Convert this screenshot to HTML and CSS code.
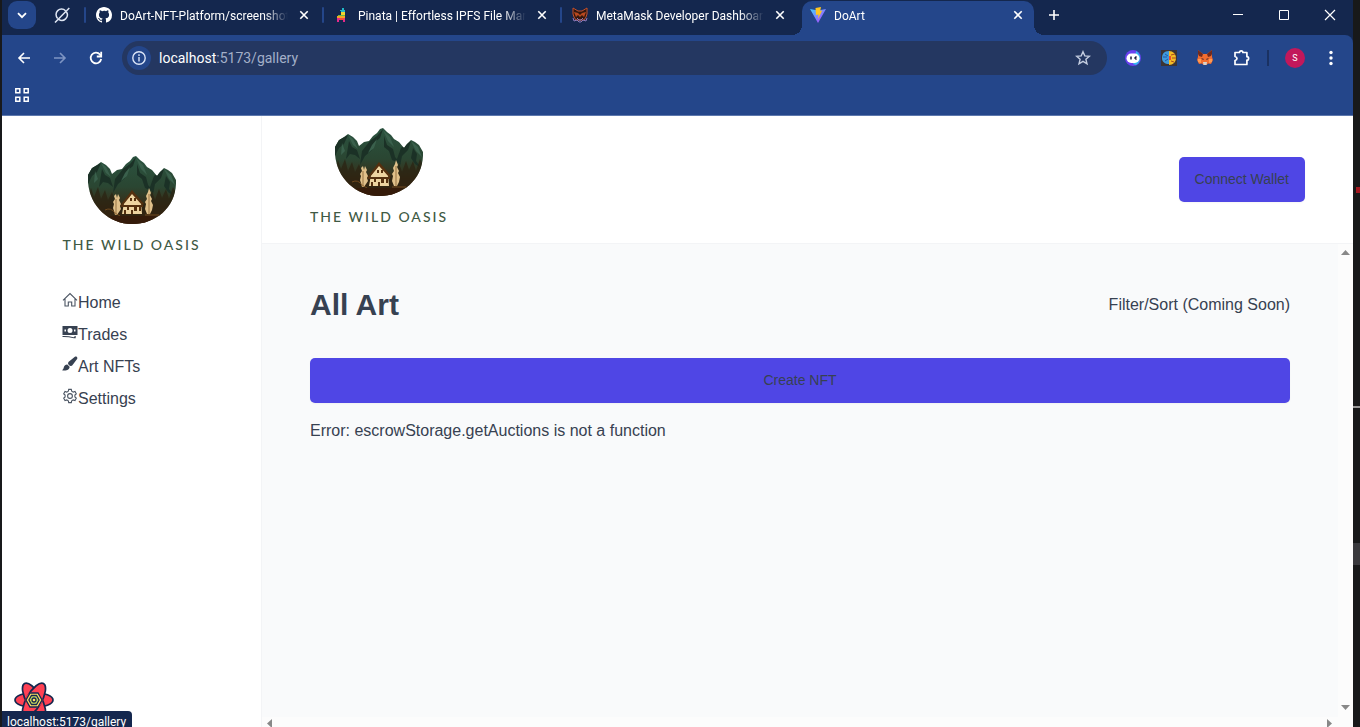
FILE: index.html
```html
<!DOCTYPE html>
<html lang="en">
<head>
<meta charset="utf-8">
<title>DoArt</title>
<link rel="stylesheet" href="styles.css">
</head>
<body>
<svg class="defs" aria-hidden="true">
  <defs>
    <linearGradient id="slope" x1="0" y1="0" x2="0" y2="1">
      <stop offset="0" stop-color="#2b5340"/><stop offset=".45" stop-color="#2a4632"/><stop offset=".75" stop-color="#3a2a15"/><stop offset="1" stop-color="#4f280d"/>
    </linearGradient>
    <clipPath id="bowl"><path d="M0 19 4 12 9 9 13 6 18 9 22 13 24 18 29 14 34 13 38 8 42 5 45 1 48 0 52 4 56 7 59 11 64 14 69 20 72 16 76 12 80 14 84 17 88 24C89 50 69 68 44 68S-2 47 0 19Z"/></clipPath>
    <symbol id="oasis" viewBox="0 0 88 68">
      <g clip-path="url(#bowl)">
        <path fill="url(#slope)" d="M0 0h88v68H0z"/>
        <path fill="#1b3126" d="M13 7 9 16l-5 4-4 8V14zM14 13l3 6 5 3 3 9-5-4-5-1-4 5zM48 1l-3 9-6 5-2 7-7 6-5 9 2-14 8-10 7-5zM49 8l3 9 6 4 2 8 6 7-9-4-3-9-5-4zM76 13l-3 9-6 6-2 10-3-7 4-11zM78 20l4 6-1 7 5 7-6-4-4-6z"/>
        <path fill="#3a604c" d="m13 7 5 4 5 10-5-4zM48 2l7 7 4 10-6-6zM42 11l-3 9-6 5 4-8zM76 13l7 6 4 10-6-6zM7 15l3 8-4 4z"/>
        <path fill="#2b2211" opacity=".7" d="M0 40l3-8 3 9 4-10 3 12 4-9 3 10 4-8 4 11h32l4-12 3 9 4-11 3 9 4-9 3 10 4-12 5 9v40H0z"/>
        <path fill="#e0c08a" d="m26 40 2-2 1 4 1-4 2 4-1 2 2 4-1 2 1 3-2 3-2 3h-2l-1-4-1-3 1-4-1-2 2-3zM61 32l2 5-1 2 2 4-1 2 2 4-1 5-2 4h-3l-2-5 1-5-1-2 2-3-1-3 2-4z"/>
        <path fill="none" stroke="#755022" stroke-width=".7" d="M28 43v16M61 38v21"/>
        <path fill="#edd3a0" d="M36 47 44 37l9 9 1 12H34z"/>
        <path fill="#55300f" d="m44 34 12 14-2 1-10-11-9 11-3 1zM33 49h22v2H33zM39 51h2v3h-2zM46 51h3v4h-3zM51 51h2v4h-2zM42 42h2v3h-2zM46 42h2v3h-2zM36 54h2v4h-2zM43 54h2v4h-2z"/>
        <path fill="none" stroke="#8d5a25" stroke-width=".7" d="M17 54q6-3 10 3l5 3M57 59h14M36 61h18"/>
        <path fill="#351b0a" d="M21 60h47L58 68H30z"/>
      </g>
    </symbol>
    <symbol id="close" viewBox="0 0 16 16"><path fill="none" stroke="#fff" stroke-width="1.6" d="m4.300 4.300 7.400 7.400m0-7.400-7.400 7.400"/></symbol>
    <linearGradient id="vite" x1="0" x2="1" y1="0" y2="1"><stop stop-color="#41d1ff"/><stop offset="1" stop-color="#bd34fe"/></linearGradient>
  </defs>
</svg>

<div class="desktop">
<div class="browser">
  <header class="tabstrip">
    <button class="tab-search" aria-label="Search tabs"><svg width="16" height="16" viewBox="0 0 16 16"><path fill="none" stroke="#fff" stroke-width="1.800" d="m4 6.200 4 4 4-4"/></svg></button>
    <div class="pinned"><svg width="16" height="16" viewBox="0 0 16 16" fill="none" stroke="#dfe6f3" stroke-width="1.500"><path d="M11.500 3.700A5.500 5.500 0 0 0 3.600 11.400M4.700 12.400A5.500 5.500 0 0 0 12.500 5M1 15.500 15.300 1"/></svg></div>
    <span class="sep"></span>
    <div class="tab">
      <svg width="16" height="16" viewBox="0 0 16 16"><path fill="#fff" d="M8 0C3.580 0 0 3.580 0 8c0 3.540 2.290 6.530 5.470 7.590.4.070.55-.17.55-.38v-1.490c-2.010.37-2.530-.49-2.690-.94-.09-.23-.48-.94-.82-1.130-.28-.15-.68-.52-.01-.53.63-.01 1.080.58 1.230.82.72 1.210 1.870.87 2.330.66.070-.52.28-.87.51-1.070-1.780-.2-3.640-.89-3.640-3.950 0-.87.31-1.590.82-2.150-.08-.2-.36-1.020.08-2.120 0 0 .67-.21 2.200.82A7.500 7.500 0 0 1 8 3.860c.68 0 1.360.09 2 .27 1.530-1.040 2.200-.82 2.200-.82.44 1.100.16 1.920.08 2.120.51.56.82 1.270.82 2.150 0 3.070-1.870 3.750-3.650 3.950.29.25.54.73.54 1.480v2.200c0 .21.15.46.55.38A8 8 0 0 0 16 8c0-4.420-3.580-8-8-8Z"/></svg>
      <span class="title">DoArt-NFT-Platform/screenshot</span>
      <button class="x" aria-label="Close tab"><svg width="16" height="16"><use href="#close"/></svg></button>
      <span class="sep"></span>
    </div>
    <div class="tab">
      <svg width="16" height="16" viewBox="0 0 16 16"><path fill="#20b7c8" d="M8 1h2v2h1v3H7V4H6V3h2z"/><path fill="#f1d42f" d="M7 5h4v3H7z"/><path fill="#69bd45" d="M4 8h7v2H4z"/><path fill="#f6a623" d="M3 9h8v2H3z"/><path fill="#e6298b" d="M3 11h8v4H9v-2H5v2H3z"/><path fill="#ef5038" d="M6 11h4v2H6z"/></svg>
      <span class="title">Pinata | Effortless IPFS File Mana</span>
      <button class="x" aria-label="Close tab"><svg width="16" height="16"><use href="#close"/></svg></button>
      <span class="sep"></span>
    </div>
    <div class="tab">
      <svg width="16" height="16" viewBox="0 0 16 16"><path fill="#32180f" stroke="#c5502b" d="m1 1 5 3h4l5-3v6l-1 3-2 3H4l-2-3-1-3z"/><path fill="#b9491f" d="m2 5 4 1 2 2 2-2 4-1-2 5-2-2-2 2-2-2-2 2z"/><path fill="none" stroke="#8c79b9" d="m1 11 1 3 3-1 2 2h2l2-2 3 1 1-3M5 11l2 2h2l2-2"/></svg>
      <span class="title">MetaMask Developer Dashboar</span>
      <button class="x" aria-label="Close tab"><svg width="16" height="16"><use href="#close"/></svg></button>
    </div>
    <div class="tab active">
      <svg width="16" height="16" viewBox="0 0 16 16"><path fill="url(#vite)" d="M0 2 8 3.500 16 2 8 16z"/><path fill="#ffc51f" d="m5.500 1 5.500-1-.8 4 2-.4L8 12l.5-4.500-2.500.5z"/></svg>
      <span class="title">DoArt</span>
      <button class="x" aria-label="Close tab"><svg width="16" height="16"><use href="#close"/></svg></button>
    </div>
    <button class="new-tab" aria-label="New tab"><svg width="12" height="12"><path stroke="#fff" stroke-width="1.600" d="M6 1v10M1 6h10"/></svg></button>
    <div class="window-controls">
      <button aria-label="Minimize"><svg width="12" height="12"><path stroke="#fff" d="M1 5.500h10"/></svg></button>
      <button aria-label="Maximize"><svg width="12" height="12"><path fill="none" stroke="#fff" d="M1.500 1.500h9v9h-9z"/></svg></button>
      <button aria-label="Close window"><svg width="12" height="12"><path stroke="#fff" stroke-width="1.200" d="m1 1 10 10M11 1 1 11"/></svg></button>
    </div>
  </header>

  <div class="chrome">
    <div class="toolbar">
      <button class="tool" aria-label="Back"><svg width="16" height="16" fill="none" stroke="#fff" stroke-width="1.600"><path d="M14 8H3M8 3 3 8l5 5"/></svg></button>
      <button class="tool" aria-label="Forward"><svg width="16" height="16" fill="none" stroke="#7e95c3" stroke-width="1.600"><path d="M2 8h11M8 3l5 5-5 5"/></svg></button>
      <button class="tool" aria-label="Reload"><svg width="16" height="16" fill="none" stroke="#fff" stroke-width="1.800"><path d="M13.200 9A5.300 5.300 0 1 1 12 4.500L13 6"/><path d="M13.200 1.800v4.700H8.800"/></svg></button>
      <div class="address">
        <button class="info" aria-label="Site information"><svg width="16" height="16" fill="none" stroke="#dbe5f8" stroke-width="1.400"><circle cx="8" cy="8" r="6.200"/><path d="M8 7v4.500M8 4.300v1.600"/></svg></button>
        <div class="url" role="textbox" aria-label="Address"><span>localhost</span>:5173/gallery</div>
        <button class="star" aria-label="Bookmark this tab"><svg width="16" height="16"><path fill="none" stroke="#c4cde0" stroke-width="1.400" d="m8 1.700 1.800 4.200 4.600.4-3.500 3 1.100 4.500-4-2.400-4 2.400 1.100-4.500-3.500-3 4.600-.4z"/></svg></button>
      </div>
      <div class="extensions">
        <button class="tool" aria-label="Wallet extension"><svg width="16" height="16"><circle cx="8" cy="8" r="8" fill="#6840f0"/><path fill="#33b7ef" d="M11 1a8 8 0 0 1 0 14l-3-1 3-12z"/><rect x="1.500" y="3.500" width="13" height="9.500" rx="4.700" fill="#fff"/><path stroke="#191b38" stroke-width="1.500" fill="none" d="M6 6.500v3M11.500 6.500 10 8l1.500 1.500"/></svg></button>
        <button class="tool" aria-label="Brain extension"><svg width="16" height="16"><path fill="#3c3435" d="M0 0h16v16H0z"/><path fill="#3e9add" d="M8 1C3 1 1 4 1 8s3 6 7 6z"/><path fill="#f4bb26" d="M8 1c4 0 7 3 7 7s-3 7-7 7z"/><path fill="none" stroke="#2257a6" d="M2 7h4M4 4l3 2M4 11l3-2"/><path fill="none" stroke="#a84a20" d="m10 5 4-1M11 8h4M10 11l3 1"/><path fill="#e94b31" d="M8 6h2v4H8z"/></svg></button>
        <button class="tool" aria-label="MetaMask"><svg width="16" height="16"><path fill="#f36d30" d="m1 0 5 4h4l5-4v7l1 3-2 4-3-.5L9.500 15h-3L5 13.500 2 14l-2-4 1-3z"/><path fill="#6f2b20" d="m1 0 5 4-1 3-3-1-1-2zM15 0l-5 4 1 3 3-1 1-2z"/><path fill="#ff9a52" d="M1 9h3v4l-3-1zM15 9h-3v4l3-1z"/><path fill="#3f2930" d="m4 8 3 1-1 1zM12 8 9 9l1 1z"/><path fill="#d9d3cb" d="M6 12h4l-.5 3h-3z"/></svg></button>
        <button class="tool" aria-label="Extensions"><svg width="18" height="18"><path fill="none" stroke="#fff" stroke-width="1.700" stroke-linejoin="round" d="M3 3.500h4.500a1.700 1.700 0 0 1 3.400 0h4v4.200a1.700 1.700 0 0 1 0 3.400v4.400H3v-4q2-.4 2-2t-2-2z"/></svg></button>
      </div>
      <span class="divider"></span>
      <button class="tool" aria-label="Profile"><span class="avatar">S</span></button>
      <button class="tool" aria-label="Browser menu"><svg width="16" height="16" fill="#fff"><circle cx="8" cy="2.500" r="1.700"/><circle cx="8" cy="8" r="1.700"/><circle cx="8" cy="13.500" r="1.700"/></svg></button>
    </div>
    <div class="bookmarks">
      <button class="tool" aria-label="All bookmarks"><svg width="16" height="16" fill="none" stroke="#fff" stroke-width="1.500"><path d="M1.800 1.800h4v4h-4zM10.200 1.800h4v4h-4zM1.800 10.200h4v4h-4zM10.200 10.200h4v4h-4z"/></svg></button>
    </div>
  </div>

  <div class="page">
    <aside class="sidebar">
      <div class="logo"><svg width="88" height="68"><use href="#oasis"/></svg><span>THE WILD OASIS</span></div>
      <nav>
        <a href="#home"><svg width="16" height="16" viewBox="0 0 16 16" fill="none" stroke="#4b5563" stroke-width="1.100"><path d="M1 8.300 8 1.500l7 6.800M3 6.800V14h3.300v-4h3.400v4H13V6.800"/></svg>Home</a>
        <a href="#trades"><svg width="16" height="16" viewBox="0 0 16 16" fill="#374151"><path fill-rule="evenodd" d="M.5 2h15v9H.5zm7.500 2a2.400 2.400 0 1 0 0 5 2.400 2.400 0 0 0 0-5M2.500 5.500v2h1.500v-2zm9.500 0v2h1.500v-2z"/><path d="M.5 12q6-.2 11 1.200l1-.2v-1h1.200v2.300H12Q6 12.800.5 13z"/></svg>Trades</a>
        <a href="#art"><svg width="16" height="16" viewBox="0 0 16 16" fill="#374151"><path d="M14.900.9c.6.5.6 1.300.2 2L10 9.700 8 10 6 8l.4-2L12.900.8c.6-.4 1.400-.4 2 .1M5.300 8.500l2.300 2.200c.2 2.800-3.500 4.600-7.600 3.500 1.500-.8 1.500-1.800 1.900-3.200.5-1.700 1.800-2.600 3.400-2.500"/></svg>Art NFTs</a>
        <a href="#settings"><svg width="16" height="16" viewBox="0 0 16 16" fill="none" stroke="#4b5563" stroke-width="1.100"><circle cx="8" cy="8" r="2.400"/><path d="m6.700 1.400-.4 1.800-1.500.9-1.800-.6-1.300 2.300 1.400 1.300v1.800l-1.400 1.300L3 12.500l1.800-.6 1.500.9.400 1.800h2.600l.4-1.800 1.500-.9 1.800.6 1.300-2.300-1.400-1.300V7.100l1.400-1.300L13 3.500l-1.800.6-1.500-.9-.4-1.800z"/></svg>Settings</a>
      </nav>
    </aside>
    <div class="content">
      <header class="topbar">
        <div class="logo"><svg width="88" height="68"><use href="#oasis"/></svg><span>THE WILD OASIS</span></div>
        <button class="btn">Connect Wallet</button>
      </header>
      <div class="scroller">
        <main>
          <div class="heading"><h1>All Art</h1><p>Filter/Sort (Coming Soon)</p></div>
          <button class="btn">Create NFT</button>
          <p>Error: escrowStorage.getAuctions is not a function</p>
        </main>
        <div class="bar vertical"><svg width="9" height="5"><path fill="#888" d="M0 5 4.500 0 9 5z"/></svg><svg width="9" height="5"><path fill="#888" d="M0 0h9L4.500 5z"/></svg></div>
        <div class="bar horizontal"><svg width="5" height="9"><path fill="#888" d="M5 0v9L0 4.500z"/></svg><svg width="5" height="9"><path fill="#888" d="M0 0v9l5-4.500z"/></svg></div>
      </div>
    </div>
  </div>

  <button class="devtools" aria-label="Open query devtools"><svg width="40" height="40" viewBox="0 0 40 40"><g fill="#ff4154" stroke="#14274e" stroke-width="1.700"><ellipse cx="20" cy="19" rx="19" ry="7.500"/><ellipse cx="20" cy="19" rx="19" ry="7.500" transform="rotate(60 20 19)"/><ellipse cx="20" cy="19" rx="19" ry="7.500" transform="rotate(120 20 19)"/></g><circle cx="20" cy="19" r="8.500" fill="#ff4154"/><g stroke="#14274e" stroke-width="1.300" fill="#ffe066"><path d="m16 12h8l4 7-4 7h-8l-4-7z"/><path fill="#c6dc5d" d="m17.500 14.500h5l2.600 4.500-2.600 4.500h-5L14.900 19z"/><circle cx="20" cy="19" r="2"/></g></svg></button>
  <div class="status">localhost:5173/gallery</div>
</div>
<div class="behind"></div>
</div>
</body>
</html>
```
FILE: styles.css
```css
* { box-sizing: border-box; }
body {
  margin: 0;
  overflow: hidden;
  color: #374151;
  font: 16px/24px "Liberation Sans", Arial, sans-serif;
}
button { margin: 0; padding: 0; border: 0; background: none; font: inherit; color: inherit; }
svg { display: block; flex: none; }
h1, p { margin: 0; }
.defs { position: absolute; width: 0; height: 0; }

.desktop { display: flex; height: 100vh; background: #18191b; padding-left: 2px; }
.browser { position: relative; flex: 1; min-width: 0; display: flex; flex-direction: column; background: #14274e; }
.behind {
  width: 7px;
  background:
    linear-gradient(#a31820, #a31820) 3px 187px / 4px 6px no-repeat,
    linear-gradient(#999, #999) 0 406px / 7px 2px no-repeat,
    linear-gradient(#39393d, #39393d) 0 543px / 7px 22px no-repeat,
    #18191a;
}

/* Tab strip */
.tabstrip { display: flex; height: 35px; color: #fff; font: 12px/18px Roboto, "Noto Sans", sans-serif; }
.tab-search { display: grid; place-items: center; width: 28px; height: 28px; margin: 1px 0 0 6px; border-radius: 9px; background: #24468a; }
.pinned { display: grid; place-items: center; flex: 0 0 48px; height: 30px; padding-left: 4px; }
.sep { flex: none; width: 2px; height: 16px; margin-top: 7px; border-radius: 1px; background: #24468a; }
.tab { position: relative; flex: 0 1 238px; min-width: 0; display: flex; height: 34px; margin-top: 1px; padding-left: 10px; }
.tab > svg { margin-top: 6px; }
.title {
  flex: 1;
  min-width: 0;
  height: 20px;
  margin: 6px 8px 0;
  overflow: hidden;
  white-space: nowrap;
  mask-image: linear-gradient(90deg, #000 calc(100% - 24px), transparent);
}
.x { width: 16px; height: 16px; margin: 6px 12px 0 0; }
.tab .sep { position: absolute; right: 0; top: 6px; margin: 0; }
.active { z-index: 0; }
.active::before { content: ""; position: absolute; z-index: -1; inset: 0 4px 0 2px; border-radius: 10px 10px 0 0; background: #24468a; }
.active::after {
  content: "";
  position: absolute;
  z-index: -1;
  inset: auto -6px 0 -8px;
  height: 10px;
  background:
    radial-gradient(circle at 0 0, transparent 10px, #24468a 10px) left / 10px 10px no-repeat,
    radial-gradient(circle at 100% 0, transparent 10px, #24468a 10px) right / 10px 10px no-repeat;
}
.new-tab { display: grid; place-items: center; width: 32px; height: 30px; }
.window-controls { display: flex; margin-left: auto; }
.window-controls button { display: grid; place-items: center; width: 46px; height: 30px; }

/* Toolbar */
.chrome { background: #24468a; border-bottom: 1px solid #5d78ad; border-radius: 0 8px 0 0; }
.toolbar { display: flex; align-items: center; height: 46px; padding: 0 4px; }
.tool { display: grid; place-items: center; flex: none; width: 36px; height: 34px; }
.address { flex: 1; display: flex; align-items: center; height: 34px; margin: 0 8px; padding: 0 16px 0 5px; border-radius: 17px; background: #243761; }
.info { display: grid; place-items: center; width: 24px; height: 24px; border-radius: 50%; background: #24468a; }
.url { flex: 1; margin-left: 8px; color: #a3afc8; font: 14px/20px Roboto, "Noto Sans", sans-serif; }
.url span { color: #fff; }
.extensions { display: flex; }
.divider { width: 2px; height: 16px; margin: 0 8px; background: #1a3162; }
.avatar { width: 20px; height: 20px; border-radius: 50%; background: #c2185b; color: #fff; font: 9px/20px Roboto, sans-serif; text-align: center; }
.bookmarks { height: 34px; padding: 0 2px; }
.bookmarks .tool { height: 28px; }

/* Application */
.page { flex: 1; min-height: 0; display: flex; background: #fff; }
.sidebar { flex: 0 0 260px; padding: 40px 0 0; border-right: 1px solid #f3f4f6; }
.logo { display: flex; flex-direction: column; align-items: center; color: #3f5a45; font: 500 14px/20px Lato, sans-serif; letter-spacing: 2px; }
.logo span { margin-top: 11px; white-space: nowrap; }
nav { display: flex; flex-direction: column; gap: 8px; margin: 36px 0 0 60px; }
nav a { display: flex; color: inherit; text-decoration: none; }
nav svg { margin-top: 1px; }
.content { flex: 1; min-width: 0; display: flex; flex-direction: column; }
.topbar { display: flex; align-items: center; justify-content: space-between; height: 128px; padding: 0 48px; border-bottom: 1px solid #f3f4f6; }
.topbar .logo { margin-bottom: 4px; }
.btn { height: 45px; padding: 0 16px 2px; border-radius: 5px; background: #4f46e5; color: #374151; font-size: 14px; line-height: 20px; box-shadow: 0 1px 2px #0000000a; }
.scroller { flex: 1; min-height: 0; display: grid; grid-template: 1fr 10px / 1fr 15px; background: #fcfcfc; }
main { display: flex; flex-direction: column; padding: 40px 48px; background: #f9fafb; }
.heading { display: flex; align-items: center; justify-content: space-between; height: 42px; margin-bottom: 32px; }
h1 { font-size: 30px; line-height: 40px; }
main > p { margin-top: 16px; }
.bar { display: flex; justify-content: space-between; }
.vertical { flex-direction: column; align-items: center; padding: 6px 0 7px; }
.horizontal { padding: 2px 6px 0 5px; overflow: hidden; }

/* Overlays */
.devtools { position: absolute; left: 12px; bottom: 6px; }
.status { position: absolute; left: 0; bottom: 0; height: 16px; padding: 2px 6px 0 5px; overflow: hidden; border-radius: 0 4px 0 0; background: #14274e; color: #fff; font: 12px/18px Roboto, "Noto Sans", sans-serif; }
```
